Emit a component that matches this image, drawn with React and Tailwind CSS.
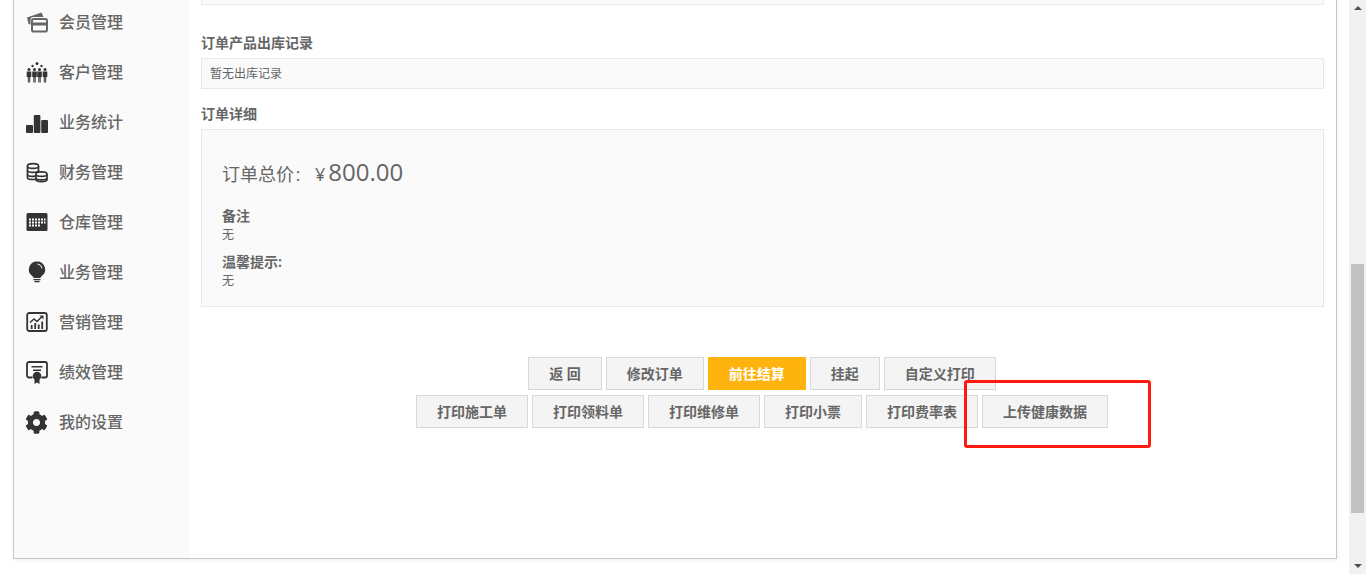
import React from "react";
import { FaCog } from "react-icons/fa";

const F = { fontFamily: '"Open Sans","Noto Sans CJK SC",sans-serif' };

const Card = () => (
  <svg viewBox="0 0 22 22" className="w-[22px] h-[22px]" fill="#666">
    <path d="M1 6.500 15.500 1.500 17.500 6H7.500a3 3 0 0 0-3 3v4.500L2.500 13Z" />
    <rect x="6" y="8" width="15" height="12.500" rx="1.800" fill="#fafafa" stroke="#666" strokeWidth="2" />
    <rect x="6" y="11.500" width="15" height="3" />
  </svg>
);
const People = () => (
  <svg viewBox="0 0 22 22" className="w-[22px] h-[22px]" fill="#333">
    <circle cx="11" cy="2.500" r="1.500" />
    <circle cx="6.500" cy="5" r="1.200" /><circle cx="15.500" cy="5" r="1.200" />
    {[3, 8.500, 13.500, 19].map((x) => (
      <g key={x}>
        <circle cx={x} cy="8.500" r="1.500" />
        <path d={`M${x - 2.300} 10.500h4.600v5.500h-1.100V21.500h-1v-5h-.4v5h-1v-5.500h-1.100Z`} />
      </g>
    ))}
  </svg>
);
const Bars = () => (
  <svg viewBox="0 0 22 22" className="w-[22px] h-[22px]" fill="#333">
    <rect x="0" y="14" width="7" height="8" rx="1" />
    <rect x="7.800" y="4" width="6.600" height="18" rx="1" />
    <rect x="15.200" y="9" width="6.800" height="13" rx="1" />
  </svg>
);
const Coins = () => (
  <svg viewBox="0 0 22 22" className="w-[22px] h-[22px]" fill="none" stroke="#333" strokeWidth="1.700">
    <path d="M1.500 5c0-3.200 11-3.200 11 0v12c0 2-11 2-11 0Z" fill="#fafafa" />
    <path d="M1.500 5.500c0 2.500 11 2.500 11 0M1.500 9.500c0 2.500 11 2.500 11 0M1.500 13.500c0 2.500 9 2.500 9 .5" />
    <path d="M10 13c0-2.800 11-2.800 11 0v5.500c0 2.800-11 2.800-11 0Z" fill="#fafafa" />
    <path d="M10 13.500c0 2.500 11 2.500 11 0M10 17c0 2.500 11 2.500 11 0" />
  </svg>
);
const Calendar = () => (
  <svg viewBox="0 0 22 22" className="w-[22px] h-[22px]">
    <rect x="0.500" y="2" width="21" height="18" rx="1.500" fill="#333" />
    <path d="M3 7.500h2v2H3zM6 7.500h2v2H6zM9 7.500h2v2H9zM12 7.500h2v2h-2zM15 7.500h2v2h-2zM18 7.500h1.500v2H18zM3 10.500h2v2H3zM6 10.500h2v2H6zM9 10.500h2v2H9zM12 10.500h2v2h-2zM15 10.500h2v2h-2zM18 10.500h1.500v2H18zM3 13.500h2v2H3zM6 13.500h2v2H6zM9 13.500h2v2H9zM12 13.500h2v2h-2z" fill="#fafafa" />
  </svg>
);
const Bulb = () => (
  <svg viewBox="0 0 22 22" className="w-[22px] h-[22px]" fill="#333">
    <path d="M11 0.500a8 8 0 0 1 4.500 14.700c-.7.500-1 1-1 1.800h-7c0-.8-.3-1.300-1-1.800A8 8 0 0 1 11 0.500Z" />
    <path d="M11.500 3a5 5 0 0 1 4.500 4.500" fill="none" stroke="#fafafa" strokeWidth="1" />
    <rect x="7.500" y="18" width="7" height="1.300" />
    <rect x="8.500" y="20" width="5" height="1.300" />
  </svg>
);
const Chart = () => (
  <svg viewBox="0 0 22 22" className="w-[22px] h-[22px]">
    <rect x="1.200" y="2" width="19.600" height="18" rx="2" fill="none" stroke="#333" strokeWidth="1.800" />
    <path d="M4 11.500l4-3.500 3 2.500 5-5" fill="none" stroke="#333" strokeWidth="1.500" />
    <path d="M13.500 4.500h4v4Z" fill="#333" />
    <path d="M4.800 14h1.800v4H4.800zM8.300 12h1.800v6H8.300zM11.800 13.500h1.800V18h-1.800zM15.300 10.500h1.800V18h-1.800z" fill="#333" />
  </svg>
);
const Cert = () => (
  <svg viewBox="0 0 22 23" className="w-[22px] h-[23px]">
    <path d="M6.500 16.500H3a2 2 0 0 1-2-2V3a2 2 0 0 1 2-2h16a2 2 0 0 1 2 2v11.500a2 2 0 0 1-2 2h-3.500" fill="none" stroke="#333" strokeWidth="1.800" />
    <path d="M5.500 5h11v1.500h-11zM7 8.500h8v1.400H7z" fill="#333" />
    <circle cx="11" cy="15" r="4.300" fill="#333" />
    <path d="M8.500 18h5v5L11 21.500 8.500 23Z" fill="#333" />
  </svg>
);
const Gear = () => <FaCog className="w-[23px] h-[23px] text-[#333]" />;

const menu = [
  ["会员管理", Card],
  ["客户管理", People],
  ["业务统计", Bars],
  ["财务管理", Coins],
  ["仓库管理", Calendar],
  ["业务管理", Bulb],
  ["营销管理", Chart],
  ["绩效管理", Cert],
  ["我的设置", Gear],
];

const Btn = ({ children, primary }) => (
  <button
    className={
      "h-[33px] px-5 border text-[14px] leading-none font-bold whitespace-pre " +
      (primary
        ? "bg-[#ffb30f] border-[#ffb30f] text-white"
        : "bg-[#f4f4f4] border-[#d8d8d8] text-[#666]")
    }
  >
    {children}
  </button>
);

export default function App() {
  return (
    <div className="relative flex h-[574px] overflow-hidden bg-white text-[#666]" style={F}>
      <div className="flex-1 min-w-0 pl-[13px] pr-[12px]">
        <div className="flex h-[559px] border-x border-b border-[#c8c8c8] shadow-[1px_2px_4px_rgba(0,0,0,0.06)]">
          <aside className="w-[175px] shrink-0 bg-[#fafafa] pl-[11px] -mt-[3px]">
            {menu.map(([label, Icon]) => (
              <div key={label} className="flex items-center h-[50px]">
                <span className="flex justify-center w-[23px]"><Icon /></span>
                <span className="ml-[11px] text-[16px] font-medium leading-none">{label}</span>
              </div>
            ))}
          </aside>
          <main className="flex-1 min-w-0 pl-[12px] pr-[12px]">
            <div className="h-[5px] bg-[#fafafa] border border-t-0 border-[#e8e8e8]" />
            <h4 className="mt-[30px] text-[14px] leading-[16px] font-bold">订单产品出库记录</h4>
            <div className="mt-[7px] h-[31px] flex items-center px-2 bg-[#fafafa] border border-[#e8e8e8] text-[12px]">暂无出库记录</div>
            <h4 className="mt-[17px] text-[14px] leading-[16px] font-bold">订单详细</h4>
            <div className="mt-[7px] h-[178px] px-5 pt-[24px] bg-[#fafafa] border border-[#e8e8e8]">
              <div className="flex items-baseline h-[32px] font-normal">
                <span className="text-[18px]">订单总价</span>
                <span className="w-[8px] text-center text-[18px]">:</span>
                <span className="ml-[13px] text-[18px]">¥</span>
                <span className="ml-[3px] text-[24px]">800.00</span>
              </div>
              <div className="mt-[21px] text-[14px] leading-[18px] font-bold">备注</div>
              <div className="mt-[1px] text-[12px] leading-[18px]">无</div>
              <div className="mt-[9px] text-[14px] leading-[18px] font-bold">温馨提示:</div>
              <div className="mt-[1px] text-[12px] leading-[18px]">无</div>
            </div>
            <div className="mt-[50px] mr-[1px] flex flex-col items-center gap-[5px]">
              <div className="flex gap-1">
                <Btn>返 回</Btn>
                <Btn>修改订单</Btn>
                <Btn primary>前往结算</Btn>
                <Btn>挂起</Btn>
                <Btn>自定义打印</Btn>
              </div>
              <div className="flex gap-1">
                <Btn>打印施工单</Btn>
                <Btn>打印领料单</Btn>
                <Btn>打印维修单</Btn>
                <Btn>打印小票</Btn>
                <Btn>打印费率表</Btn>
                <Btn>上传健康数据</Btn>
              </div>
            </div>
          </main>
        </div>
      </div>
      <div className="w-[17px] shrink-0 bg-[#f1f1f1] flex flex-col items-center justify-between py-[6px] relative">
        <svg viewBox="0 0 8 4" className="w-[8px] h-[4px]"><path d="M4 0l4 4H0Z" fill="#505050" /></svg>
        <div className="absolute left-[2px] top-[264px] w-[13px] h-[249px] bg-[#c1c1c1]" />
        <svg viewBox="0 0 8 4" className="w-[8px] h-[4px]"><path d="M0 0h8L4 4Z" fill="#505050" /></svg>
      </div>
      <div className="absolute left-[964px] top-[380px] w-[187px] h-[68px] border-[3px] border-[#ff1a10] rounded-[3px]" />
    </div>
  );
}
